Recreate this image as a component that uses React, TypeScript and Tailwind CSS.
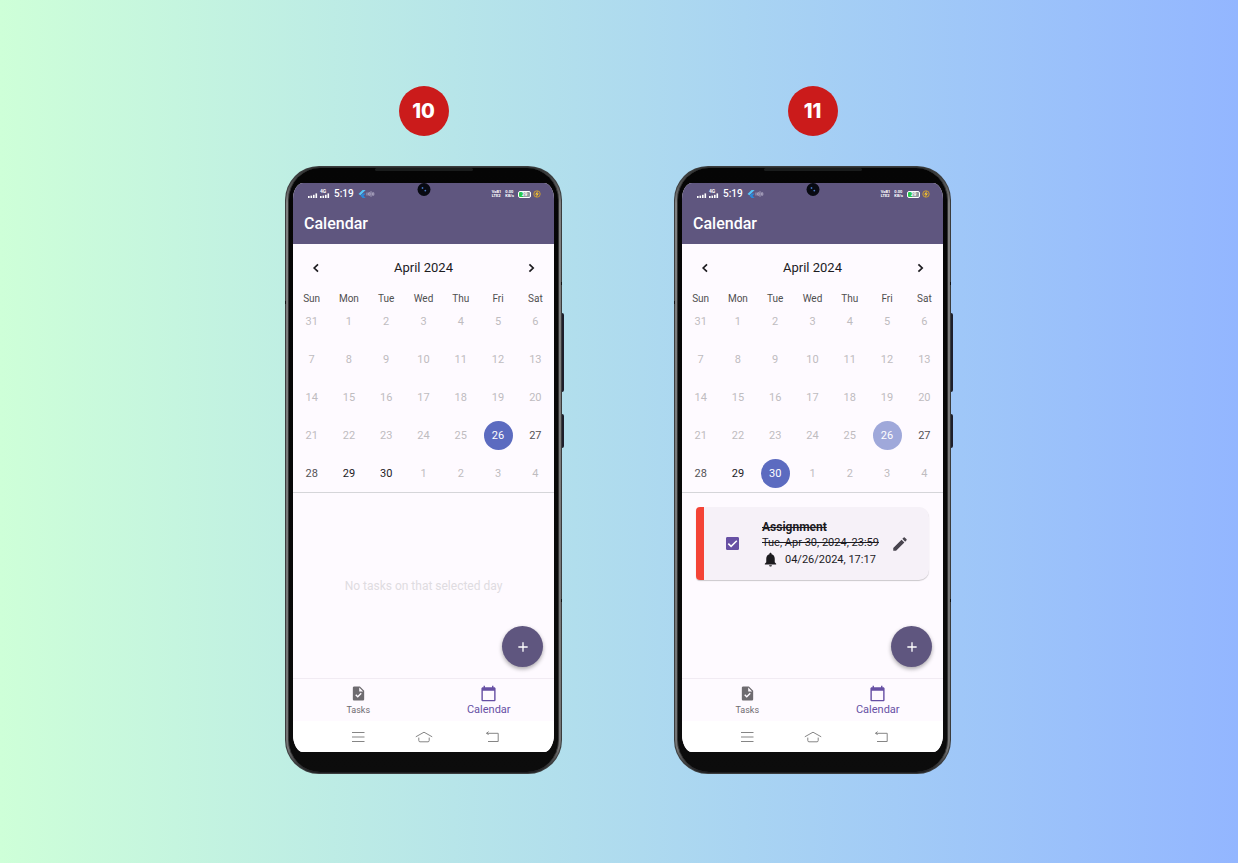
import { useState } from "react";
import { MdAdd, MdCalendarToday, MdEdit, MdNotifications, MdTask } from "react-icons/md";

const weekdays = ["Sun", "Mon", "Tue", "Wed", "Thu", "Fri", "Sat"];

const weeks = [
  [31, 1, 2, 3, 4, 5, 6],
  [7, 8, 9, 10, 11, 12, 13],
  [14, 15, 16, 17, 18, 19, 20],
  [21, 22, 23, 24, 25, 26, 27],
  [28, 29, 30, 1, 2, 3, 4],
];

const TODAY = 26;

function dayClass(week: number, day: number, selected: number) {
  const inMonth = !(week === 0 && day > 7) && !(week === 4 && day < 7);
  if (inMonth && day === selected) return "bg-[#5c6bc0] text-white";
  if (inMonth && day === TODAY) return "bg-[#9fa8da] text-white";
  if (!inMonth || day < TODAY) return "text-[#bfbcc0]";
  if (day === 27 || day === 28) return "text-[#545256]";
  return "text-[#1c1b1f]";
}

function SignalBars() {
  return (
    <svg viewBox="0 0 10 5" className="h-[5px] w-2.5" fill="#fff" aria-hidden="true">
      <rect x="0" y="3" width="1.6" height="2" />
      <rect x="2.5" y="2.6" width="1.6" height="2.4" />
      <rect x="5" y="1.8" width="1.6" height="3.2" />
      <rect x="7.5" y="0.4" width="1.6" height="4.6" />
    </svg>
  );
}

function StatusBar() {
  return (
    <div className="flex h-[22px] items-center pr-[13px] pl-[15px] text-white">
      <div className="flex flex-1 items-center">
        <span className="flex items-end gap-0.5 pb-0.5">
          <SignalBars />
          <span className="flex flex-col">
            <span className="text-[5px] leading-[4px] font-bold">4G</span>
            <SignalBars />
          </span>
        </span>
        <span className="ml-1 text-[10px] leading-3 font-medium">5:19</span>
        <svg viewBox="0 0 8 8" className="ml-1 size-2" aria-hidden="true">
          <path d="M4.6 0H7.6L2.4 5.2.5 3.9Z" fill="#55c5f8" />
          <path d="M4.6 3.6H7.6L5.5 5.7 7.6 8H4.6L2.5 5.7Z" fill="#2b87d8" />
        </svg>
        <svg viewBox="0 0 9 8" className="h-2 w-[9px]" fill="none" stroke="#b9b4cd" strokeWidth="0.8" aria-hidden="true">
          <path d="M1 2.5V5.5M2.6 2.8H4V5.2H2.6ZM5 1.2V6.8M6.4 2.8H7.8V5.2H6.4Z" />
        </svg>
      </div>
      <div className="flex items-center gap-1">
        <span className="text-[4px] leading-[4px] font-bold">
          VoB1
          <br />
          LTE2
        </span>
        <span className="text-[4px] leading-[4px] font-bold">
          0.00
          <br />
          KB/s
        </span>
        <span className="flex h-[7px] w-[13px] items-center justify-center rounded-xs border border-white bg-linear-to-r from-[#27c94b] from-35% to-[#8d9a9f] to-35% text-[5px] leading-[5px] font-bold">
          29
        </span>
        <svg viewBox="0 0 8 8" className="-ml-0.5 size-2" aria-hidden="true">
          <circle cx="4" cy="4" r="3.2" fill="none" stroke="#d6a42b" strokeWidth="0.9" />
          <path d="M5 .8 2 4.4H3.8L3 7.2 6 3.6H4.2Z" fill="#ffc928" />
        </svg>
      </div>
    </div>
  );
}

function Calendar({ selected, onSelect }: { selected: number; onSelect: (d: number) => void }) {
  return (
    <section className="border-b border-[#d5d5d9]">
      <div className="flex h-[51px] items-center justify-between px-[15px] pb-[3px] text-[#1c1b1f]">
        <button type="button" aria-label="Previous month">
          <svg viewBox="0 0 16 16" className="size-4" fill="none" stroke="currentColor" strokeWidth="1.7" aria-hidden="true">
            <path d="M10 4.3 6.2 8 10 11.7" />
          </svg>
        </button>
        <h2 className="text-[13px] leading-4">April 2024</h2>
        <button type="button" aria-label="Next month">
          <svg viewBox="0 0 16 16" className="size-4" fill="none" stroke="currentColor" strokeWidth="1.7" aria-hidden="true">
            <path d="M6.4 4.3 10.2 8 6.4 11.7" />
          </svg>
        </button>
      </div>
      <table className="w-full table-fixed border-collapse text-center">
        <thead>
          <tr className="text-[10px] leading-[7px] text-[#4f4f4f]">
            {weekdays.map((w) => (
              <th key={w} scope="col" className="p-0 font-normal">
                {w}
              </th>
            ))}
          </tr>
        </thead>
        <tbody>
          {weeks.map((week, i) => (
            <tr key={i} className="h-[38px]">
              {week.map((day) => (
                <td key={day} className="p-0">
                  <button
                    type="button"
                    onClick={() => onSelect(day)}
                    className={`mx-auto flex size-[29px] items-center justify-center rounded-full pt-0.5 text-[11px] leading-4 ${dayClass(i, day, selected)}`}
                  >
                    {day}
                  </button>
                </td>
              ))}
            </tr>
          ))}
        </tbody>
      </table>
    </section>
  );
}

function TaskCard() {
  const [done, setDone] = useState(true);
  return (
    <article className="mx-[14px] mt-[14px] flex h-[73px] items-center overflow-hidden rounded-l-sm rounded-r-[10px] bg-[#f6f1f8] pr-5 text-[#1c1b1f] shadow-[0_1px_1px_#00000033]">
      <div className="h-full w-2 bg-[#f44336]" />
      <span className="relative ml-[22px] flex size-[13px]">
        <input
          id="assignment"
          type="checkbox"
          checked={done}
          onChange={() => setDone(!done)}
          className="peer size-full appearance-none rounded-[1px] border border-[#6750a4] checked:bg-[#6750a4]"
        />
        <svg viewBox="0 0 13 13" className="pointer-events-none absolute inset-0 size-full opacity-0 peer-checked:opacity-100" fill="none" stroke="#fff" strokeWidth="1.5" aria-hidden="true">
          <path d="M2.3 6.6 5.1 9.4 10.8 3.7" />
        </svg>
      </span>
      <div className="ml-[23px] flex-1 whitespace-nowrap">
        <label htmlFor="assignment" className="block text-[12px] leading-4 font-bold line-through">
          Assignment
        </label>
        <p className="text-[11px] leading-4 line-through">Tue, Apr 30, 2024, 23:59</p>
        <p className="flex items-center text-[11px] leading-4">
          <MdNotifications className="mr-1.5 size-[17px]" />
          04/26/2024, 17:17
        </p>
      </div>
      <button type="button" aria-label="Edit Assignment" className="text-[#49454f]">
        <MdEdit className="size-[18px]" />
      </button>
    </article>
  );
}

function BottomNav() {
  return (
    <nav className="grid h-[43px] grid-cols-2 border-t border-[#f1ebf3] bg-[#fefaff] pt-1.5">
      <a href="#tasks" className="flex flex-col items-center gap-0.5 text-[#6e6b70]">
        <MdTask className="size-[17px]" />
        <span className="text-[9px] leading-3">Tasks</span>
      </a>
      <a href="#calendar" className="flex flex-col items-center gap-0.5 text-[#6750a4]">
        <MdCalendarToday className="size-[17px]" />
        <span className="text-[11px] leading-3">Calendar</span>
      </a>
    </nav>
  );
}

function SystemNav() {
  return (
    <div className="flex h-[31px] items-center justify-center gap-[50px] bg-white text-[#858585]">
      <button type="button" aria-label="Recent apps">
        <svg viewBox="0 0 18 12" className="h-3 w-[18px]" fill="none" stroke="currentColor">
          <path d="M5 1.5H17.5M5 6H17.5M5 10.5H17.5" />
        </svg>
      </button>
      <button type="button" aria-label="Home">
        <svg viewBox="0 0 18 12" className="h-3 w-[18px]" fill="none" stroke="currentColor" strokeLinejoin="round">
          <path d="M.8 5.8 9 1.2 17.2 5.8M3.8 6.6V9.5Q3.8 10.8 5 10.8H13Q14.2 10.8 14.2 9.5V6.6" />
        </svg>
      </button>
      <button type="button" aria-label="Back">
        <svg viewBox="0 0 18 12" className="h-3 w-[18px]" fill="none" stroke="currentColor">
          <path d="M3.5 2.3H15.2V10.5H5M5.6.6 3.5 2.3 5.6 3.6" />
        </svg>
      </button>
    </div>
  );
}

function Phone({ initialDay }: { initialDay: number }) {
  const [selected, setSelected] = useState(initialDay);
  return (
    <div className="relative w-[277px] rounded-[34px] bg-[#3a3c3d] p-px">
      <span className="absolute top-[147px] -right-0.5 h-[79px] w-0.5 rounded-r-sm bg-[#1e1f2b]" />
      <span className="absolute top-[248px] -right-0.5 h-[34px] w-0.5 rounded-r-sm bg-[#1e1f2b]" />
      <span className="absolute top-[116px] right-0 h-[3px] w-px bg-[#111]" />
      <span className="absolute top-[433px] right-0 h-[3px] w-px bg-[#111]" />
      <span className="absolute top-[135px] left-0 h-[3px] w-px bg-[#111]" />
      <span className="absolute top-0.5 left-[90px] h-[3px] w-[98px] rounded-full bg-[#1a1c1c]" />
      <div className="rounded-[33px] bg-[linear-gradient(to_bottom,#2b2d2d,#808080_6%,#747474_96%,#1b1b1e)] px-0.5 py-px">
        <div className="rounded-[32px] border-x border-[#333] bg-linear-to-b from-[#050505] to-[#0c0c0c] px-1 pt-[15px] pb-5">
          <div className="relative flex flex-col overflow-hidden bg-[#fefaff] [border-radius:10px_10px_10px_10px/16px_16px_18px_18px]">
            <span className="absolute top-0 left-1/2 flex size-[13px] -translate-x-1/2 items-center justify-center rounded-full bg-[#080a12]">
              <svg viewBox="0 0 13 13" className="size-full" aria-hidden="true">
                <circle cx="5" cy="5" r="0.9" fill="#3f72c0" />
                <circle cx="7.8" cy="7.6" r="0.9" fill="#4a78c4" />
              </svg>
            </span>
            <header className="h-[61px] bg-[#5f567f] text-white">
              <StatusBar />
              <h1 className="px-[11px] text-[16px] leading-[38px] font-medium">Calendar</h1>
            </header>
            <Calendar selected={selected} onSelect={setSelected} />
            <div className="relative h-[185px]">
              {selected === 30 ? (
                <TaskCard />
              ) : (
                <p className="pt-[85px] text-center text-[12px] leading-4 text-[#dfdce1]">
                  No tasks on that selected day
                </p>
              )}
              <button
                type="button"
                aria-label="Add task"
                className="absolute right-[11px] bottom-[11px] flex size-[41px] items-center justify-center rounded-full bg-[#5f567f] text-white shadow-[0_2px_4px_#00000055]"
              >
                <MdAdd className="size-4" />
              </button>
            </div>
            <BottomNav />
            <SystemNav />
          </div>
        </div>
      </div>
    </div>
  );
}

function Step({ number, initialDay }: { number: number; initialDay: number }) {
  return (
    <section className="flex flex-col items-center gap-[30px]">
      <div className="flex size-[50px] items-center justify-center rounded-full bg-[#cb1b1b] font-[Inter,sans-serif] text-[20px] leading-6 font-extrabold text-white">
        {number}
      </div>
      <Phone initialDay={initialDay} />
    </section>
  );
}

export default function App() {
  return (
    <main className="flex min-h-screen items-start justify-center gap-[112px] bg-linear-to-r from-[#ceffd8] to-[#93b6ff] pt-[86px] pr-0.5 pb-[86px] font-[Roboto,sans-serif]">
      <Step number={10} initialDay={26} />
      <Step number={11} initialDay={30} />
    </main>
  );
}
